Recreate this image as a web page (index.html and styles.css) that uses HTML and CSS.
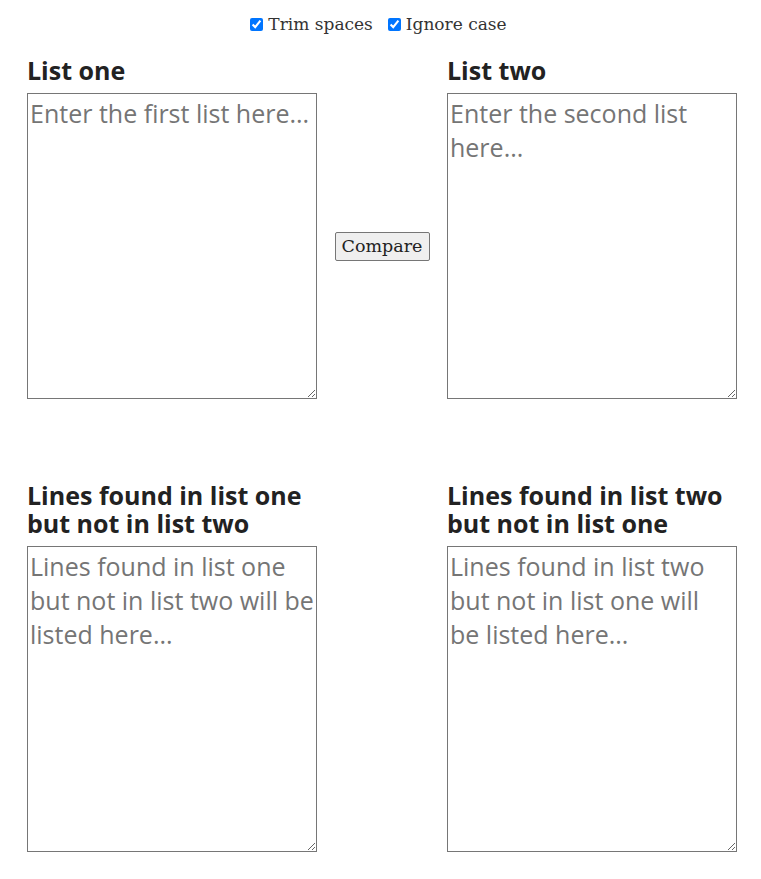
FILE: index.html
```html
<!DOCTYPE html>
<html>
<head>
<meta charset="utf-8">
<link rel="stylesheet" href="styles.css">
</head>
<body>
<div class="page">
  <div class="options">
    <label class="opt"><input type="checkbox" checked> Trim spaces</label>
    <label class="opt"><input type="checkbox" checked> Ignore case</label>
  </div>
  <div class="grid">
    <div class="col">
      <h2 class="title">List one</h2>
      <textarea class="box" placeholder="Enter the first list here..."></textarea>
    </div>
    <div class="mid"><button class="btn">Compare</button></div>
    <div class="col">
      <h2 class="title">List two</h2>
      <textarea class="box" placeholder="Enter the second list here..."></textarea>
    </div>
  </div>
  <div class="grid results">
    <div class="col">
      <h2 class="title">Lines found in list one but not in list two</h2>
      <textarea class="box" placeholder="Lines found in list one but not in list two will be listed here..."></textarea>
    </div>
    <div class="mid"></div>
    <div class="col">
      <h2 class="title">Lines found in list two but not in list one</h2>
      <textarea class="box" placeholder="Lines found in list two but not in list one will be listed here..."></textarea>
    </div>
  </div>
</div>
</body>
</html>
```
FILE: styles.css
```css
html, body { margin: 0; padding: 0; background: #fff; }
.page { padding: 10px 24px 0 27px; }
.options {
  display: flex;
  justify-content: center;
  gap: 15px;
  font-family: "DejaVu Serif", serif;
  font-size: 17px;
  color: #333;
  height: 28px;
  align-items: center;
  padding-right: 7px;
}
.opt { display: flex; align-items: center; gap: 5px; }
.opt input { margin: 0; width: 13px; height: 13px; }
.grid {
  display: grid;
  grid-template-columns: 290px 130px 290px;
  margin-top: 18px;
}
.results { margin-top: 82px; }
.col { display: flex; flex-direction: column; }
.title {
  font-family: "Open Sans", sans-serif;
  font-weight: 700;
  font-size: 25px;
  line-height: 28px;
  color: #222;
  margin: 0 0 9px 0;
}
.box {
  box-sizing: border-box;
  width: 290px;
  height: 306px;
  border: 1px solid #767676;
  padding: 2px 2px;
  font-family: "Open Sans", sans-serif;
  font-size: 25px;
  line-height: 34px;
  margin: 0;
  resize: both;
}
.box::placeholder { color: #757575; }
.mid { display: flex; align-items: center; justify-content: center; padding-top: 37px; }
.btn {
  font-family: "DejaVu Serif", serif;
  font-size: 17.5px;
  color: #222;
  background: #efefef;
  border: 1px solid #767676;
  border-radius: 2px;
  padding: 2px 4px;
  height: 29px;
  width: 95px;
}
```
